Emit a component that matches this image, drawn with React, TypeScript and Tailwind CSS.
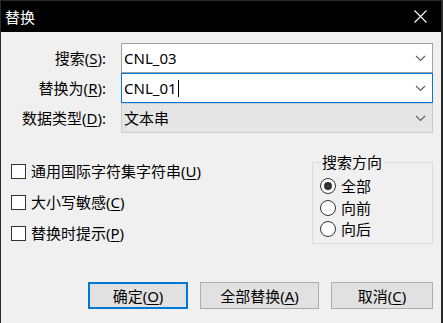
import { ReactNode } from "react";

const U = ({ children }: { children: ReactNode }) => (
  <span className="underline underline-offset-[2px] decoration-1">{children}</span>
);

const Chevron = () => (
  <svg width="11" height="7" viewBox="0 0 11 7" className="shrink-0">
    <path d="M1 1 L5.5 5.5 L10 1" fill="none" stroke="#606060" strokeWidth="1.2" />
  </svg>
);

function Combo({
  value,
  variant,
  caret,
}: {
  value: string;
  variant: "normal" | "focus" | "disabled";
  caret?: boolean;
}) {
  const box =
    variant === "focus"
      ? "border-[#0078d7] bg-white"
      : variant === "disabled"
      ? "border-[#cccccc] bg-[#e5e5e5]"
      : "border-[#a0a0a0] bg-white";
  return (
    <div className={`flex-1 h-[30px] border ${box} flex items-center pl-[2px] pr-[6px]`}>
      <span className="flex-1 flex items-center text-[15px] leading-[18px] text-black">
        {value}
        {caret && <span className="ml-[1px] w-[1px] h-[17px] bg-black" />}
      </span>
      <Chevron />
    </div>
  );
}

function Row({ label, children }: { label: ReactNode; children: ReactNode }) {
  return (
    <div className="flex items-center">
      <div className="w-[120px] pr-[15px] text-right text-[15px] leading-[18px]">{label}</div>
      {children}
    </div>
  );
}

function Check({ children }: { children: ReactNode }) {
  return (
    <div className="flex items-center h-[16px] gap-[5px]">
      <div className="w-[15px] h-[15px] border border-[#333333] bg-white" />
      <span className="text-[15px] leading-[18px]">{children}</span>
    </div>
  );
}

function Radio({ checked, children }: { checked?: boolean; children: ReactNode }) {
  return (
    <div className="flex items-center h-[16px] gap-[5px]">
      <div className="w-[16px] h-[16px] rounded-full border border-[#333333] bg-white flex items-center justify-center">
        {checked && <div className="w-[8px] h-[8px] rounded-full bg-[#333333]" />}
      </div>
      <span className="text-[15px] leading-[18px]">{children}</span>
    </div>
  );
}

function Btn({ primary, w, children }: { primary?: boolean; w: string; children: ReactNode }) {
  return (
    <button
      className={`${w} h-[27px] bg-[#e1e1e1] flex items-center justify-center text-[15px] leading-[18px] text-black ${
        primary ? "border-2 border-[#0078d7]" : "border border-[#adadad]"
      }`}
    >
      {children}
    </button>
  );
}

export default function App() {
  return (
    <div className="w-[443px] h-[323px] bg-[#f0f0f0] border-l border-t border-r-2 border-[#2a2a2a] overflow-hidden flex flex-col font-['Noto_Sans','Noto_Sans_CJK_SC',sans-serif] text-black">
      {/* Title bar */}
      <div className="h-[31px] bg-black flex items-center justify-between pl-[4px] pr-[14px] shrink-0">
        <span className="text-white text-[15px] leading-[18px]">替换</span>
        <svg width="13" height="13" viewBox="0 0 13 13">
          <path d="M0.5 0.5 L12.5 12.5 M12.5 0.5 L0.5 12.5" stroke="#ffffff" strokeWidth="1.1" />
        </svg>
      </div>

      {/* Fields */}
      <div className="flex flex-col pt-[11px] pr-[8px]">
        <Row label={<>搜索(<U>S</U>):</>}>
          <Combo value="CNL_03" variant="normal" />
        </Row>
        <Row label={<>替换为(<U>R</U>):</>}>
          <Combo value="CNL_01" variant="focus" caret />
        </Row>
        <Row label={<>数据类型(<U>D</U>):</>}>
          <Combo value="文本串" variant="disabled" />
        </Row>
      </div>

      {/* Options */}
      <div className="flex justify-between items-start mt-[21px] pr-[8px]">
        <div className="flex flex-col gap-[15px] pl-[10px] pt-[9px]">
          <Check>
            通用国际字符集字符串(<U>U</U>)
          </Check>
          <Check>
            大小写敏感(<U>C</U>)
          </Check>
          <Check>
            替换时提示(<U>P</U>)
          </Check>
        </div>
        <fieldset className="w-[121px] border border-[#dcdcdc] px-[7px] pb-[6px] flex flex-col">
          <legend className="px-[2px] text-[15px] leading-[16px]">搜索方向</legend>
          <div className="flex flex-col gap-[5.5px] pt-[8px]">
            <Radio checked>全部</Radio>
            <Radio>向前</Radio>
            <Radio>向后</Radio>
          </div>
        </fieldset>
      </div>

      {/* Buttons */}
      <div className="flex justify-end gap-[12px] mt-[38px] pr-[8px]">
        <Btn primary w="w-[100px]">
          确定(<U>O</U>)
        </Btn>
        <Btn w="w-[119px]">
          全部替换(<U>A</U>)
        </Btn>
        <Btn w="w-[102px]">
          取消(<U>C</U>)
        </Btn>
      </div>
    </div>
  );
}
